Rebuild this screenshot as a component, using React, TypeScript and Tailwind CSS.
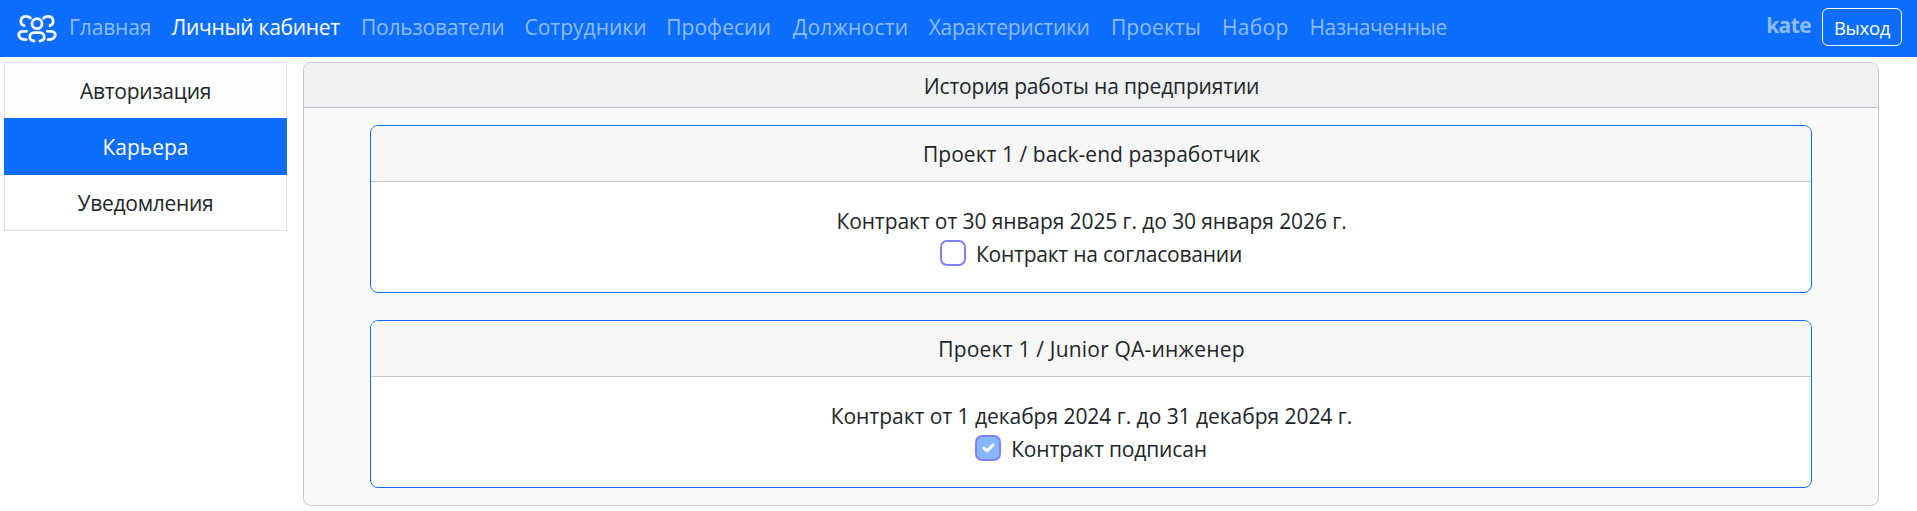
type NavItem = { label: string; box: string; active?: boolean };

const navItems: NavItem[] = [
  { label: "Главная", box: "w-[102.6px] tracking-[-0.15px]" },
  { label: "Личный кабинет", box: "w-[189.4px] tracking-[-0.3px]", active: true },
  { label: "Пользователи", box: "w-[163.5px] tracking-[-0.2px]" },
  { label: "Сотрудники", box: "w-[141.7px]" },
  { label: "Професии", box: "w-[126.7px] tracking-[0.05px]" },
  { label: "Должности", box: "w-[135.8px] tracking-[0.2px]" },
  { label: "Характеристики", box: "w-[182.3px] tracking-[-0.25px]" },
  { label: "Проекты", box: "w-[111px] tracking-[0.1px]" },
  { label: "Набор", box: "w-[87.5px] tracking-[0.3px]" },
  { label: "Назначенные", box: "w-[140px] tracking-[-0.35px]" },
];

function Logo() {
  return (
    <svg
      className="h-[29px] w-[40px] shrink-0"
      viewBox="51 39 120 87"
      fill="none"
      stroke="#f4f9ff"
      strokeWidth="8.5"
      strokeLinecap="round"
      strokeLinejoin="round"
    >
      <circle cx="111" cy="68" r="15" />
      <path d="M72 74C57 68 61 46 78 46C84 46 88 48 91 51" />
      <path d="M150 74C165 68 161 46 144 46C138 46 134 48 131 51" />
      <path d="M80 91H68C51 91 51 116 78 116" />
      <path d="M142 91H154C171 91 171 116 144 116" />
      <path d="M102 120C84 119 86 95 102 95H120C136 95 138 119 120 120" />
    </svg>
  );
}

function Checkbox({ checked }: { checked: boolean }) {
  return (
    <span
      role="checkbox"
      aria-checked={checked}
      className={
        "mt-[2px] flex size-[26px] shrink-0 items-center justify-center rounded-[7px] border-2 border-[#8080ff] " +
        (checked ? "bg-[#86b7fe]" : "bg-white")
      }
    >
      {checked && (
        <svg className="size-[20px]" viewBox="0 0 20 20" fill="none" stroke="#fff" strokeWidth="3" strokeLinecap="round" strokeLinejoin="round">
          <path d="m6 10 3 3 6-6" />
        </svg>
      )}
    </span>
  );
}

type CardProps = {
  title: string;
  titleClass: string;
  period: string;
  periodClass: string;
  status: string;
  statusClass: string;
  checked: boolean;
};

function ContractCard(p: CardProps) {
  return (
    <article className="h-[168px] w-[1442px] overflow-hidden rounded-[8px] border border-[#0d6efd] bg-white">
      <h3 className={"flex h-[56px] items-center justify-center border-b border-[#c8c8c8] bg-[#f7f7f7] pt-[2px] pl-px " + p.titleClass}>
        {p.title}
      </h3>
      <div className="pt-[23px]">
        <p className={"pl-px text-center " + p.periodClass}>{p.period}</p>
        <div className="flex h-[33px] items-start justify-center gap-[10px]">
          <Checkbox checked={p.checked} />
          <span className={p.statusClass}>{p.status}</span>
        </div>
      </div>
    </article>
  );
}

export default function App() {
  return (
    <div className="h-[511px] w-[1917px] overflow-hidden bg-white font-['Open_Sans','Noto_Sans',sans-serif] text-[21px] leading-[33px] text-[#212529]">
      <nav className="flex h-[57px] items-center bg-[#0d6efd] pr-[15px] pl-[17px]">
        <Logo />
        <ul className="flex pb-[2px] pl-[12px]">
          {navItems.map((n) => (
            <li key={n.label} className={"whitespace-nowrap " + n.box + (n.active ? " text-white" : " text-[#8fbcff]")}>
              {n.label}
            </li>
          ))}
        </ul>
        <div className="ml-auto flex items-center">
          <span className="mr-[11px] pb-[6px] font-bold tracking-[-0.6px] text-[#8fbcff]">kate</span>
          <button className="mb-[3px] flex h-[38px] w-[80px] items-center justify-center rounded-[6px] border border-white text-[18.5px] tracking-[-0.3px] text-white">
            Выход
          </button>
        </div>
      </nav>
      <div className="flex items-start pt-[5px] pl-[4px]">
        <aside className="w-[283px] text-center">
          <div className="flex h-[56px] items-center justify-center border-x border-t border-[#dee2e6] bg-[#fcfffe] pt-[2px] tracking-[-0.25px]">
            Авторизация
          </div>
          <div className="flex h-[57px] items-center justify-center bg-[#0d6efd] pt-[2px] text-white">Карьера</div>
          <div className="flex h-[56px] items-center justify-center border-x border-b border-[#dee2e6] bg-white pt-[2px] tracking-[-0.28px]">
            Уведомления
          </div>
        </aside>
        <main className="ml-[16px] h-[444px] w-[1576px] overflow-hidden rounded-[8px] border border-[#c9cacc] bg-[#f8f9fb]">
          <h2 className="flex h-[45px] items-center justify-center border-b border-[#c4c6c9] bg-[#f0f1f3] pt-[3px] pl-px tracking-[-0.17px]">
            История работы на предприятии
          </h2>
          <div className="flex flex-col items-center gap-[27px] pt-[17px]">
            <ContractCard
              title="Проект 1 / back-end разработчик"
              titleClass="tracking-[0.04px]"
              period="Контракт от 30 января 2025 г. до 30 января 2026 г."
              periodClass="tracking-[-0.1px]"
              status="Контракт на согласовании"
              statusClass="tracking-[-0.23px]"
              checked={false}
            />
            <ContractCard
              title="Проект 1 / Junior QA-инженер"
              titleClass="tracking-[0.2px]"
              period="Контракт от 1 декабря 2024 г. до 31 декабря 2024 г."
              periodClass="tracking-[-0.04px]"
              status="Контракт подписан"
              statusClass="tracking-[-0.17px]"
              checked
            />
          </div>
        </main>
      </div>
    </div>
  );
}
